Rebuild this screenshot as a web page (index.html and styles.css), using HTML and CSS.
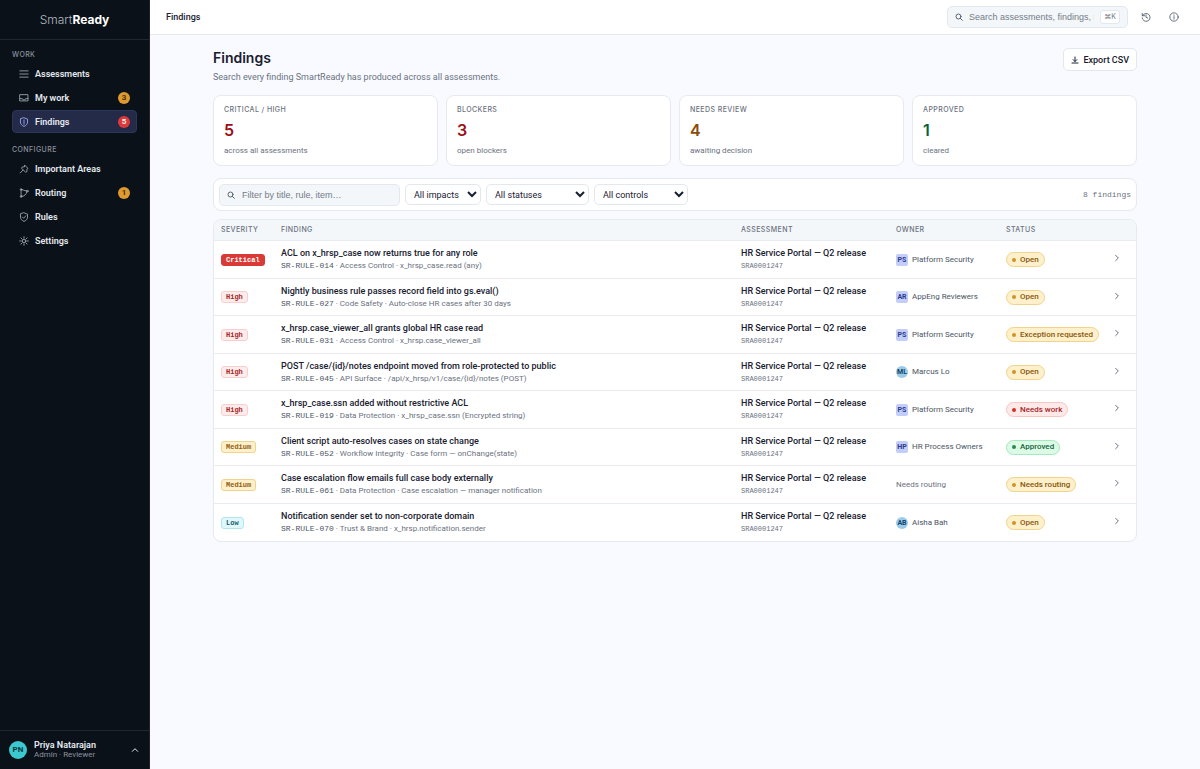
FILE: index.html
```html
<!DOCTYPE html>
<html lang="en">
<head>
  <meta charset="UTF-8" />
  <meta name="viewport" content="width=device-width, initial-scale=1" />
  <title>Findings • SmartReady</title>
  <link rel="stylesheet" href="styles.css">
</head>
<body>

  <!-- Icon set -->
  <svg class="sprite" aria-hidden="true">
    <symbol id="i-search" viewBox="0 0 24 24"><circle cx="10.5" cy="10.5" r="7.5"/><path d="M16 16l6 6"/></symbol>
    <symbol id="i-chev" viewBox="0 0 24 24"><path d="M8 4l8 8-8 8"/></symbol>
    <symbol id="i-up" viewBox="0 0 24 24"><path d="M4 16l8-8 8 8"/></symbol>
    <symbol id="i-shield" viewBox="0 0 24 24"><path d="M12 2l8.500 3v7c0 5-3.500 8.500-8.500 10.500C7 20.500 3.500 17 3.500 12V5z"/><path d="M12 7v10"/></symbol>
  </svg>

  <div class="app">
    <aside class="sidebar">
      <div class="brand">Smart<b>Ready</b></div>

      <nav class="nav">
        <h2 class="nav-label">Work</h2>
        <a class="nav-item" href="#">
          <svg class="icon" viewBox="0 0 24 24"><path d="M2 4.500h20M2 12h20M2 19.500h20"/></svg>
          <span>Assessments</span>
        </a>
        <a class="nav-item" href="#">
          <svg class="icon" viewBox="0 0 24 24"><path d="M2.500 4h19v15h-19z"/><path d="M2.500 13.500H8l1.500 3h5l1.500-3h5.500"/></svg>
          <span>My work</span>
          <span class="count">3</span>
        </a>
        <a class="nav-item active" href="#">
          <svg class="icon"><use href="#i-shield"/></svg>
          <span>Findings</span>
          <span class="count count-red">5</span>
        </a>

        <h2 class="nav-label nav-label-next">Configure</h2>
        <a class="nav-item" href="#">
          <svg class="icon" viewBox="0 0 24 24"><path d="M14 3l7.500 7.500-2.500 2v5.500l-3 2-10-10 2-3h4z"/><path d="M9.500 14.500L3 21.500"/></svg>
          <span>Important Areas</span>
        </a>
        <a class="nav-item" href="#">
          <svg class="icon" viewBox="0 0 24 24"><path d="M5 4v16M6 4c5 0 6 3 12 3M6 20c7 0 11-4 13-11"/><circle cx="5" cy="3.500" r="2"/><circle cx="5" cy="20.500" r="2"/><circle cx="20" cy="7.500" r="2"/></svg>
          <span>Routing</span>
          <span class="count">1</span>
        </a>
        <a class="nav-item" href="#">
          <svg class="icon" viewBox="0 0 24 24"><path d="M12 2l8.500 3v7c0 5-3.500 8.500-8.500 10.500C7 20.500 3.500 17 3.500 12V5z"/><path d="M8 12l3 3 5.500-6"/></svg>
          <span>Rules</span>
        </a>
        <a class="nav-item" href="#">
          <svg class="icon" viewBox="0 0 24 24"><circle cx="12" cy="12" r="4"/><path d="M12 1.500v4M12 18.500v4M1.500 12h4M18.500 12h4M4.500 4.500l3 3M16.500 16.500l3 3M4.500 19.500l3-3M16.500 7.500l3-3"/></svg>
          <span>Settings</span>
        </a>
      </nav>

      <button class="user" type="button">
        <span class="user-avatar">PN</span>
        <span class="user-text">
          <span class="user-name">Priya Natarajan</span>
          <span class="user-role">Admin · Reviewer</span>
        </span>
        <svg class="icon-sm"><use href="#i-up"/></svg>
      </button>
    </aside>

    <div class="main">
      <header class="topbar">
        <span class="crumb">Findings</span>
        <label class="search">
          <svg class="icon-sm"><use href="#i-search"/></svg>
          <input type="text" aria-label="Search" placeholder="Search assessments, findings, rules…">
          <kbd>⌘K</kbd>
        </label>
        <button class="icon-btn" type="button" aria-label="History">
          <svg class="icon" viewBox="0 0 24 24"><path d="M3 3v6h6"/><path d="M3.500 9a9.500 9.500 0 1 1-.8 5"/><path d="M12 7v5.500l4 2"/></svg>
        </button>
        <button class="icon-btn" type="button" aria-label="Help">
          <svg class="icon" viewBox="0 0 24 24"><circle cx="12" cy="12" r="10"/><path d="M12 11v6M12 7v1"/></svg>
        </button>
      </header>

      <main class="content">
        <div class="page-head">
          <div>
            <h1>Findings</h1>
            <p>Search every finding SmartReady has produced across all assessments.</p>
          </div>
          <button class="export" type="button">
            <svg class="icon-sm" viewBox="0 0 24 24"><path d="M12 3v13M6.500 11l5.500 5.500 5.500-5.500M3 21h18"/></svg>
            Export CSV
          </button>
        </div>

        <section class="cards">
          <div class="card">
            <h3>Critical / High</h3>
            <strong class="red">5</strong>
            <p>across all assessments</p>
          </div>
          <div class="card">
            <h3>Blockers</h3>
            <strong class="red">3</strong>
            <p>open blockers</p>
          </div>
          <div class="card">
            <h3>Needs review</h3>
            <strong class="amber">4</strong>
            <p>awaiting decision</p>
          </div>
          <div class="card">
            <h3>Approved</h3>
            <strong class="green">1</strong>
            <p>cleared</p>
          </div>
        </section>

        <form class="filters">
          <label class="filter-text">
            <svg class="icon-sm"><use href="#i-search"/></svg>
            <input type="text" aria-label="Filter findings" placeholder="Filter by title, rule, item…">
          </label>
          <select class="sel-impact" aria-label="Impact"><option>All impacts</option></select>
          <select class="sel-status" aria-label="Status"><option>All statuses</option></select>
          <select class="sel-control" aria-label="Control"><option>All controls</option></select>
          <span class="total">8 findings</span>
        </form>

        <div class="table-wrap">
          <table>
            <thead>
              <tr>
                <th class="c-sev">Severity</th>
                <th>Finding</th>
                <th class="c-asm">Assessment</th>
                <th class="c-own">Owner</th>
                <th class="c-sta">Status</th>
                <th class="c-go"></th>
              </tr>
            </thead>
            <tbody>
              <tr>
                <td><span class="sev critical">Critical</span></td>
                <td><div class="title">ACL on x_hrsp_case now returns true for any role</div><div class="sub"><code>SR-RULE-014</code> · Access Control · x_hrsp_case.read (any)</div></td>
                <td><div class="title">HR Service Portal — Q2 release</div><div class="ref">SRA0001247</div></td>
                <td><div class="owner"><span class="av">PS</span>Platform Security</div></td>
                <td><span class="pill">Open</span></td>
                <td><svg class="go"><use href="#i-chev"/></svg></td>
              </tr>
              <tr>
                <td><span class="sev high">High</span></td>
                <td><div class="title">Nightly business rule passes record field into gs.eval()</div><div class="sub"><code>SR-RULE-027</code> · Code Safety · Auto-close HR cases after 30 days</div></td>
                <td><div class="title">HR Service Portal — Q2 release</div><div class="ref">SRA0001247</div></td>
                <td><div class="owner"><span class="av">AR</span>AppEng Reviewers</div></td>
                <td><span class="pill">Open</span></td>
                <td><svg class="go"><use href="#i-chev"/></svg></td>
              </tr>
              <tr>
                <td><span class="sev high">High</span></td>
                <td><div class="title">x_hrsp.case_viewer_all grants global HR case read</div><div class="sub"><code>SR-RULE-031</code> · Access Control · x_hrsp.case_viewer_all</div></td>
                <td><div class="title">HR Service Portal — Q2 release</div><div class="ref">SRA0001247</div></td>
                <td><div class="owner"><span class="av">PS</span>Platform Security</div></td>
                <td><span class="pill">Exception requested</span></td>
                <td><svg class="go"><use href="#i-chev"/></svg></td>
              </tr>
              <tr>
                <td><span class="sev high">High</span></td>
                <td><div class="title">POST /case/{id}/notes endpoint moved from role-protected to public</div><div class="sub"><code>SR-RULE-045</code> · API Surface · /api/x_hrsp/v1/case/{id}/notes (POST)</div></td>
                <td><div class="title">HR Service Portal — Q2 release</div><div class="ref">SRA0001247</div></td>
                <td><div class="owner"><span class="av person">ML</span>Marcus Lo</div></td>
                <td><span class="pill">Open</span></td>
                <td><svg class="go"><use href="#i-chev"/></svg></td>
              </tr>
              <tr>
                <td><span class="sev high">High</span></td>
                <td><div class="title">x_hrsp_case.ssn added without restrictive ACL</div><div class="sub"><code>SR-RULE-019</code> · Data Protection · x_hrsp_case.ssn (Encrypted string)</div></td>
                <td><div class="title">HR Service Portal — Q2 release</div><div class="ref">SRA0001247</div></td>
                <td><div class="owner"><span class="av">PS</span>Platform Security</div></td>
                <td><span class="pill pill-red">Needs work</span></td>
                <td><svg class="go"><use href="#i-chev"/></svg></td>
              </tr>
              <tr>
                <td><span class="sev medium">Medium</span></td>
                <td><div class="title">Client script auto-resolves cases on state change</div><div class="sub"><code>SR-RULE-052</code> · Workflow Integrity · Case form — onChange(state)</div></td>
                <td><div class="title">HR Service Portal — Q2 release</div><div class="ref">SRA0001247</div></td>
                <td><div class="owner"><span class="av">HP</span>HR Process Owners</div></td>
                <td><span class="pill pill-green">Approved</span></td>
                <td><svg class="go"><use href="#i-chev"/></svg></td>
              </tr>
              <tr>
                <td><span class="sev medium">Medium</span></td>
                <td><div class="title">Case escalation flow emails full case body externally</div><div class="sub"><code>SR-RULE-061</code> · Data Protection · Case escalation — manager notification</div></td>
                <td><div class="title">HR Service Portal — Q2 release</div><div class="ref">SRA0001247</div></td>
                <td><div class="owner none">Needs routing</div></td>
                <td><span class="pill">Needs routing</span></td>
                <td><svg class="go"><use href="#i-chev"/></svg></td>
              </tr>
              <tr>
                <td><span class="sev low">Low</span></td>
                <td><div class="title">Notification sender set to non-corporate domain</div><div class="sub"><code>SR-RULE-070</code> · Trust &amp; Brand · x_hrsp.notification.sender</div></td>
                <td><div class="title">HR Service Portal — Q2 release</div><div class="ref">SRA0001247</div></td>
                <td><div class="owner"><span class="av person">AB</span>Aisha Bah</div></td>
                <td><span class="pill">Open</span></td>
                <td><svg class="go"><use href="#i-chev"/></svg></td>
              </tr>
            </tbody>
          </table>
        </div>
      </main>
    </div>
  </div>

</body>
</html>
```
FILE: styles.css
```css
* {
  box-sizing: border-box;
}

body {
  margin: 0;
  font-family: Roboto, "Liberation Sans", sans-serif;
  font-size: 9px;
  line-height: 12px;
  background: #f8faff;
  color: #18202f;
}

h1, h2, h3, p {
  margin: 0;
}

button, input, select {
  font: inherit;
  color: inherit;
}

button {
  cursor: pointer;
}

h1, .brand, .card strong, .card h3, .nav-label, th {
  font-family: Inter, "Liberation Sans", sans-serif;
}

code, .ref, .sev, .total {
  font-family: "Liberation Mono", "DejaVu Sans Mono", monospace;
}

svg {
  fill: none;
  stroke: currentColor;
  stroke-width: 2;
  stroke-linecap: round;
  stroke-linejoin: round;
  flex: none;
}

.sprite {
  display: none;
}

.icon {
  width: 10px;
  height: 10px;
}

.icon-sm {
  width: 8px;
  height: 8px;
  stroke-width: 3;
}

.app {
  display: flex;
  min-height: 100vh;
}

/* Sidebar */
.sidebar {
  display: flex;
  flex-direction: column;
  flex: none;
  width: 150px;
  background: #0a1118;
  border-right: 1px solid #1d242d;
  color: #e5e9f0;
}

.brand {
  height: 40px;
  line-height: 40px;
  border-bottom: 1px solid #1f2730;
  text-align: center;
  font-size: 12px;
  font-weight: 300;
  color: #b4bac2;
}

.brand b {
  font-weight: 700;
  color: #fff;
}

.nav {
  flex: 1;
  padding: 9px 12px;
}

.nav-label {
  height: 13px;
  line-height: 12px;
  font-size: 7px;
  font-weight: 500;
  letter-spacing: 0.06em;
  text-transform: uppercase;
  color: #8a929e;
}

.nav-label-next {
  margin-top: 11px;
}

.nav-item {
  display: flex;
  align-items: center;
  gap: 6px;
  height: 23px;
  margin-bottom: 1px;
  padding: 0 6px;
  border: 1px solid transparent;
  border-radius: 4px;
  font-weight: 600;
  color: #e5e9f0;
  text-decoration: none;
}

.nav-item .icon {
  color: #a6adb8;
}

.nav-item.active {
  background: #232b48;
  border-color: #2c355a;
}

.nav-item.active .icon {
  color: #a5b4fc;
}

.count {
  width: 12px;
  height: 12px;
  margin-left: auto;
  border-radius: 50%;
  background: #dd9a2e;
  color: #3b2506;
  font-size: 8px;
  text-align: center;
}

.count-red {
  background: #dc3a38;
  color: #fff;
}

.user {
  display: flex;
  align-items: center;
  gap: 7px;
  height: 39px;
  padding: 0 10px 0 9px;
  background: none;
  border: 0;
  border-top: 1px solid #1f2730;
  text-align: left;
}

.user-avatar {
  width: 18px;
  height: 18px;
  border-radius: 50%;
  background: #3cc8cf;
  color: #0a3a44;
  font-size: 8px;
  font-weight: 700;
  line-height: 18px;
  text-align: center;
}

.user-text {
  flex: 1;
}

.user-name,
.user-role {
  display: block;
  line-height: 10px;
}

.user-name {
  font-weight: 600;
}

.user-role {
  font-size: 8px;
  color: #8a929e;
}

/* Top bar */
.main {
  flex: 1;
  min-width: 0;
}

.topbar {
  display: flex;
  align-items: center;
  height: 35px;
  padding: 0 16px;
  background: #fff;
  border-bottom: 1px solid #e5e9ef;
}

.crumb {
  flex: 1;
  font-weight: 500;
}

.search {
  display: flex;
  align-items: center;
  gap: 6px;
  width: 181px;
  height: 22px;
  padding: 0 7px;
  background: #f3f7fa;
  border: 1px solid #e3e8ee;
  border-radius: 5px;
  color: #5b6471;
}

.search input,
.filter-text input {
  flex: 1;
  min-width: 0;
  padding: 0;
  border: 0;
  outline: 0;
  background: none;
  font-family: "Liberation Sans", Arial, sans-serif;
}

::placeholder {
  color: #747c88;
  opacity: 1;
}

kbd {
  padding: 0 3px;
  background: #fff;
  border: 1px solid #e3e8ee;
  border-radius: 3px;
  font-family: Inter, "DejaVu Sans", sans-serif;
  font-size: 7px;
  color: #747c88;
}

.icon-btn {
  display: grid;
  place-items: center;
  width: 20px;
  height: 20px;
  margin-left: 8px;
  padding: 0;
  background: none;
  border: 0;
  color: #4b5563;
}

/* Page */
.content {
  max-width: 956px;
  margin: 0 auto;
  padding: 13px 16px;
}

.page-head {
  display: flex;
  justify-content: space-between;
  align-items: flex-start;
  height: 47px;
}

h1 {
  font-size: 14px;
  font-weight: 600;
  line-height: 20px;
}

.page-head p {
  margin-top: 3px;
  color: #6b7280;
}

.export {
  display: flex;
  align-items: center;
  gap: 4px;
  height: 23px;
  padding: 0 7px;
  background: #fff;
  border: 1px solid #e3e8ee;
  border-radius: 5px;
  font-weight: 500;
}

.cards {
  display: grid;
  grid-template-columns: repeat(4, 1fr);
  gap: 8px;
}

.card,
.filters,
.table-wrap {
  background: #fff;
  border: 1px solid #e6eaf0;
  border-radius: 8px;
}

.card {
  padding: 8px 10px;
}

.card h3 {
  font-size: 7px;
  font-weight: 500;
  letter-spacing: 0.06em;
  text-transform: uppercase;
  color: #6b7280;
}

.card strong {
  display: block;
  margin: 4px 0 5px;
  font-size: 16px;
  font-weight: 600;
  line-height: 20px;
}

.card p {
  font-size: 8px;
  color: #6b7280;
}

.card .red { color: #9b0f18; }
.card .amber { color: #8a4b0a; }
.card .green { color: #0b6236; }

.filters {
  display: flex;
  align-items: center;
  gap: 5px;
  height: 33px;
  margin: 12px 0 8px;
  padding: 0 5px;
}

.filter-text {
  display: flex;
  align-items: center;
  gap: 7px;
  width: 181px;
  height: 22px;
  padding: 0 7px;
  background: #f3f7fa;
  border: 1px solid #e3e8ee;
  border-radius: 5px;
  color: #5b6471;
}

select {
  height: 21px;
  padding: 0 0 0 4px;
  background: #fff;
  border: 1px solid #e3e8ee;
  border-radius: 5px;
}

.sel-impact { width: 76px; }
.sel-status { width: 103px; }
.sel-control { width: 94px; }

.total {
  margin-left: auto;
  font-size: 8px;
  color: #6b7280;
}

/* Table */
.table-wrap {
  overflow: hidden;
}

table {
  width: 100%;
  border-spacing: 0;
  table-layout: fixed;
}

th {
  height: 21px;
  padding: 0 7px;
  background: #f3f7fa;
  border-bottom: 1px solid #e8ecf1;
  font-size: 7px;
  font-weight: 500;
  letter-spacing: 0.06em;
  text-align: left;
  text-transform: uppercase;
  color: #6b7280;
}

.c-sev { width: 60px; }
.c-asm { width: 155px; }
.c-own { width: 110px; }
.c-sta { width: 107px; }
.c-go { width: 30px; }

td {
  height: 38px;
  padding: 0 7px;
  border-bottom: 1px solid #e8ecf1;
  white-space: nowrap;
}

tr:nth-child(even) td {
  height: 37px;
}

tr:last-child td {
  border-bottom: 0;
}

.title {
  font-weight: 500;
  line-height: 13px;
}

.sub,
.ref {
  font-size: 8px;
  color: #6b7280;
}

.sub code {
  font-size: 8px;
  color: #4b5563;
}

.ref {
  font-size: 7px;
}

.sev {
  display: inline-block;
  padding: 0 4px;
  border: 1px solid;
  border-radius: 3px;
  font-size: 7px;
  font-weight: 700;
  line-height: 10px;
  vertical-align: middle;
}

.critical {
  background: #d93a36;
  border-color: #d93a36;
  color: #fff;
}

.high {
  background: #fdeceb;
  border-color: #f9cfcd;
  color: #a3262a;
}

.medium {
  background: #fdf0cb;
  border-color: #f0d48c;
  color: #92600f;
}

.low {
  background: #e0f7fb;
  border-color: #b0e6ef;
  color: #15606e;
}

.owner {
  display: flex;
  align-items: center;
  gap: 4px;
  font-size: 8px;
  color: #4b5563;
}

.owner.none {
  color: #6b7280;
}

.av {
  width: 12px;
  height: 12px;
  border-radius: 2px;
  background: #c3cdfa;
  color: #2b3a8c;
  font-size: 7px;
  font-weight: 700;
  text-align: center;
}

.person {
  border-radius: 50%;
  background: #9ccbe8;
  color: #0f4468;
}

.pill {
  display: inline-flex;
  align-items: center;
  gap: 4px;
  height: 15px;
  padding: 0 5px;
  border: 1px solid #f0d48c;
  border-radius: 8px;
  background: #fdf0cb;
  color: #8a560b;
  font-size: 8px;
  font-weight: 500;
}

.pill::before {
  content: "";
  width: 4px;
  height: 4px;
  border-radius: 50%;
  background: #cf9326;
}

.pill-red {
  background: #fee9e9;
  border-color: #f9c4c4;
  color: #a3262a;
}

.pill-red::before {
  background: #d3302f;
}

.pill-green {
  background: #dcfbe6;
  border-color: #a4e8bd;
  color: #14633a;
}

.pill-green::before {
  background: #2a8a50;
}

.go {
  display: block;
  width: 8px;
  height: 8px;
  margin-bottom: 3px;
  stroke-width: 3;
  color: #6b7280;
}
```
